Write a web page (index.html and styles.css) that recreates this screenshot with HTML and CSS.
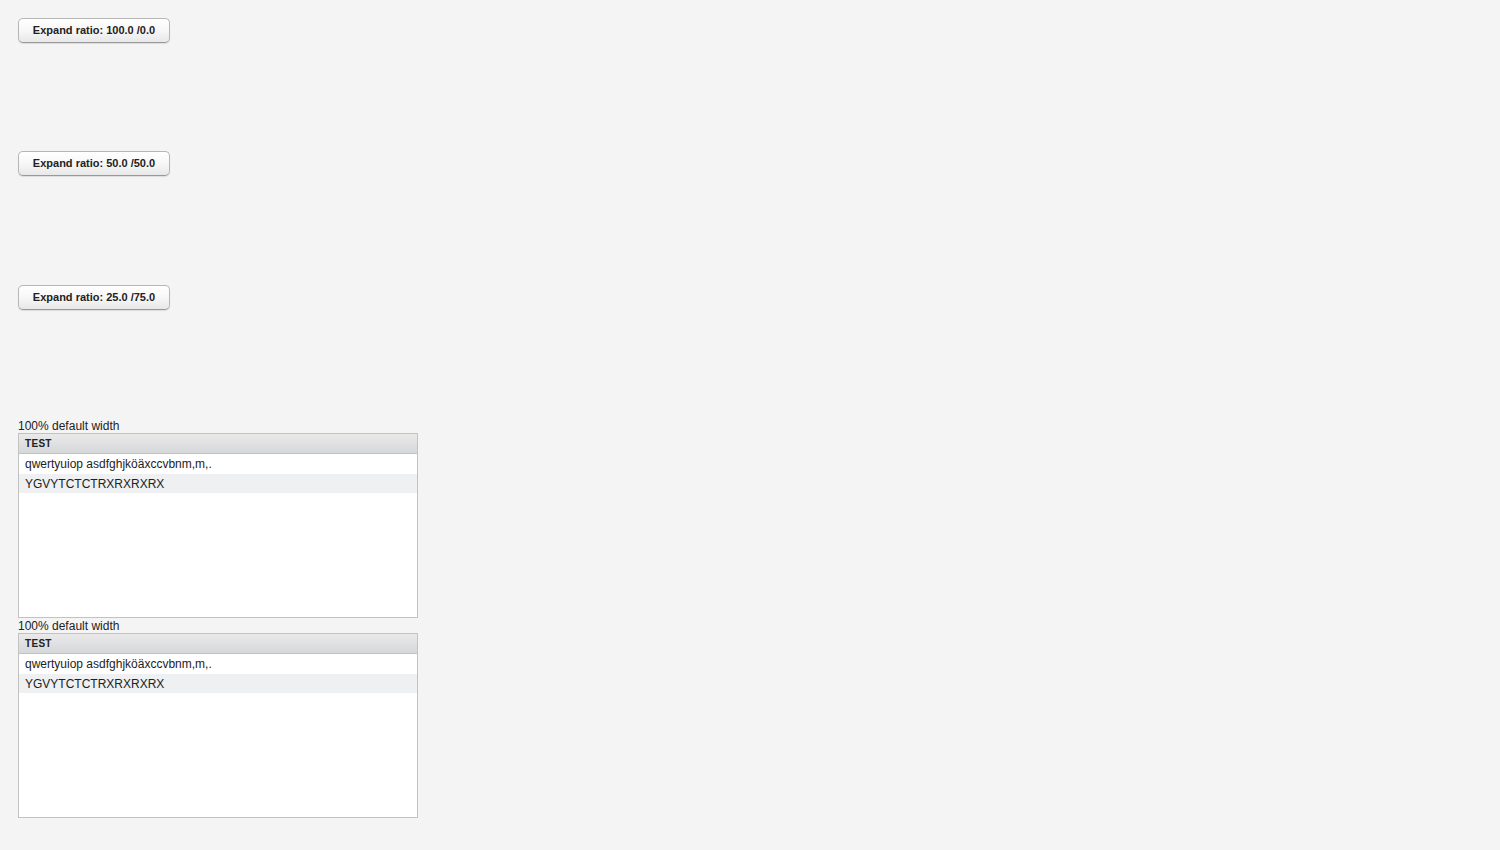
FILE: index.html
```html
<!DOCTYPE html>
<html>

<head>
  <title>Expand ratio test</title>
  <link rel="stylesheet" href="styles.css">
</head>

<body>

  <main class="root">
    <div class="slot">
      <button class="btn">Expand ratio: 100.0 /0.0</button>
    </div>
    <div class="slot slot-mid">
      <button class="btn">Expand ratio: 50.0 /50.0</button>
    </div>
    <div class="slot">
      <button class="btn">Expand ratio: 25.0 /75.0</button>
    </div>

    <div class="caption">100% default width</div>
    <div class="table">
      <div class="table-head">Test</div>
      <div class="table-body">
        <div class="row">qwertyuiop asdfghjköäxccvbnm,m,.</div>
        <div class="row odd">YGVYTCTCTRXRXRXRX</div>
      </div>
    </div>

    <div class="caption">100% default width</div>
    <div class="table">
      <div class="table-head">Test</div>
      <div class="table-body">
        <div class="row">qwertyuiop asdfghjköäxccvbnm,m,.</div>
        <div class="row odd">YGVYTCTCTRXRXRXRX</div>
      </div>
    </div>
  </main>

</body>

</html>
```

FILE: styles.css
```css
body {
  font-family: 'Liberation Sans', Arial, sans-serif;
  font-size: 12px;
  background: #f4f4f4;
  color: #222;
  margin: 0;
  padding: 0;
}

.root {
  padding: 18px;
  display: flex;
  flex-direction: column;
  align-items: flex-start;
}

.slot {
  height: 133px;
}

.slot-mid {
  height: 134px;
}

.btn {
  font-family: 'Liberation Sans', Arial, sans-serif;
  font-size: 11px;
  font-weight: bold;
  color: #222;
  width: 152px;
  height: 25px;
  padding: 0 0 1px;
  border: 1px solid #b6b6b6;
  border-bottom-color: #999;
  border-radius: 5px;
  background: linear-gradient(#ffffff, #f7f7f7 50%, #e8e8e8);
  box-shadow: 0 1px 1px rgba(0, 0, 0, 0.1);
  cursor: pointer;
}

.caption {
  height: 15px;
  line-height: 16px;
  font-size: 12px;
  color: #222;
}

.table {
  width: 400px;
  height: 185px;
  box-sizing: border-box;
  border: 1px solid #c2c2c2;
  background: #fff;
}

.table-head {
  height: 20px;
  line-height: 19px;
  box-sizing: border-box;
  padding-left: 6px;
  font-size: 10px;
  font-weight: bold;
  text-transform: uppercase;
  letter-spacing: 0.3px;
  color: #222;
  background: linear-gradient(#eaeaeb, #d6d7d9);
  border-bottom: 1px solid #c2c2c2;
}

.row {
  height: 19.5px;
  line-height: 21px;
  padding-left: 6px;
  font-size: 12px;
  color: #222;
}

.row.odd {
  background: #eff0f1;
}
```
